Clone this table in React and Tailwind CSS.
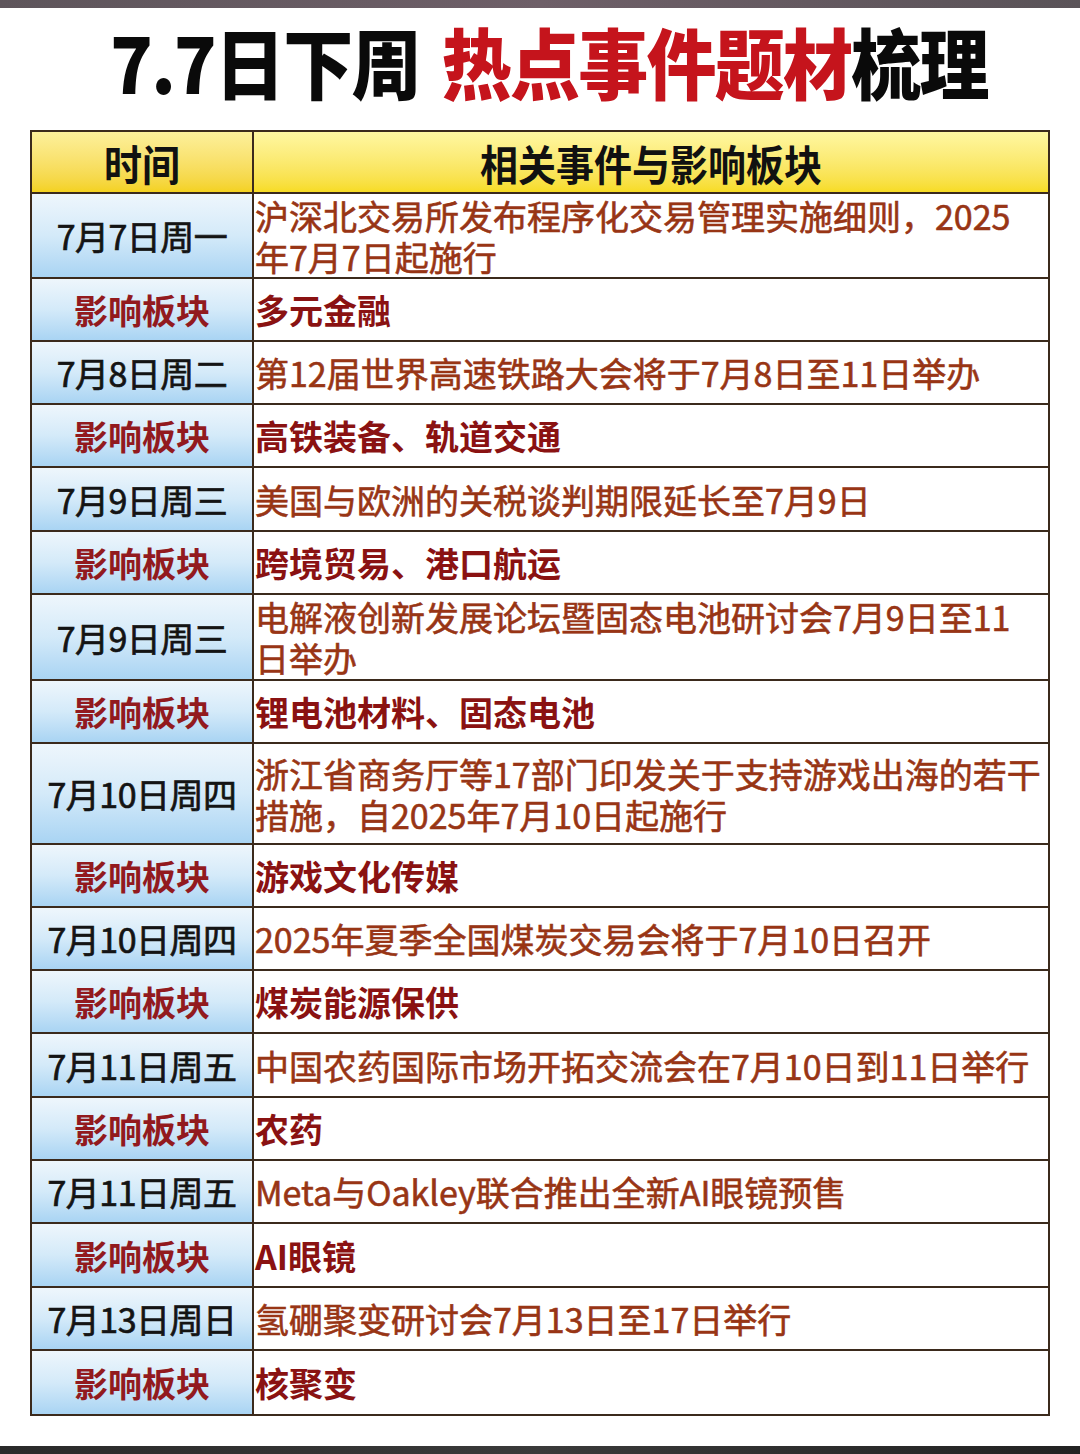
import React from 'react'

const rows = [
  { date: '7月7日周一', lines: ['沪深北交易所发布程序化交易管理实施细则，2025', '年7月7日起施行'], h: 'h-[85px]', sector: '多元金融', sh: 'h-[63px]' },
  { date: '7月8日周二', lines: ['第12届世界高速铁路大会将于7月8日至11日举办'], h: 'h-[63px]', sector: '高铁装备、轨道交通', sh: 'h-[63px]' },
  { date: '7月9日周三', lines: ['美国与欧洲的关税谈判期限延长至7月9日'], h: 'h-[64px]', sector: '跨境贸易、港口航运', sh: 'h-[63px]' },
  { date: '7月9日周三', lines: ['电解液创新发展论坛暨固态电池研讨会7月9日至11', '日举办'], h: 'h-[86px]', sector: '锂电池材料、固态电池', sh: 'h-[63px]' },
  { date: '7月10日周四', lines: ['浙江省商务厅等17部门印发关于支持游戏出海的若干', '措施，自2025年7月10日起施行'], h: 'h-[101px]', sector: '游戏文化传媒', sh: 'h-[63px]' },
  { date: '7月10日周四', lines: ['2025年夏季全国煤炭交易会将于7月10日召开'], h: 'h-[63px]', sector: '煤炭能源保供', sh: 'h-[63px]' },
  { date: '7月11日周五', lines: ['中国农药国际市场开拓交流会在7月10日到11日举行'], h: 'h-[64px]', sector: '农药', sh: 'h-[63px]' },
  { date: '7月11日周五', lines: ['Meta与Oakley联合推出全新AI眼镜预售'], h: 'h-[63px]', sector: 'AI眼镜', sh: 'h-[64px]' },
  { date: '7月13日周日', lines: ['氢硼聚变研讨会7月13日至17日举行'], h: 'h-[63px]', sector: '核聚变', sh: 'h-[65px]' },
]

const leftCell = 'flex items-center justify-center border-r-2 border-b-2 border-[#3b2a1c] bg-linear-to-b from-[#eef6fc] via-[#d4eaf9] to-[#a9d4f3] whitespace-nowrap'
const rightCell = 'flex flex-col justify-center border-r-2 border-b-2 border-[#3b2a1c] bg-white pl-[1px] whitespace-nowrap'

export default function App() {
  return (
    <div className="w-[1080px] h-[1454px] bg-white flex flex-col font-['Noto_Sans_CJK_SC',sans-serif] overflow-hidden">
      <div className="h-[8px] bg-linear-to-r from-[#5e555b] via-[#6e5f68] to-[#5a5358]" />
      <div className="h-[122px] flex items-center justify-center pb-[16px]">
        <h1 className="text-[70px] leading-none font-black tracking-tight scale-y-110 text-[#0a0a0a] ml-[18px]">
          7.7日下周<span className="ml-[22px] text-[#c5141c]">热点事件题材</span>梳理
        </h1>
      </div>
      <div className="mx-[30px] border-t-2 border-l-2 border-[#3b2a1c] grid grid-cols-[222px_1fr]">
        <div className="h-[62px] flex items-center justify-center border-r-2 border-b-2 border-[#3b2a1c] bg-linear-to-b from-[#fdf09a] to-[#f4d21e]">
          <span className="text-[38px] font-bold text-[#111] scale-y-110">时间</span>
        </div>
        <div className="h-[62px] flex items-center justify-center border-r-2 border-b-2 border-[#3b2a1c] bg-linear-to-b from-[#fff7a0] to-[#f7dc22]">
          <span className="text-[38px] font-bold text-[#111] scale-y-110">相关事件与影响板块</span>
        </div>
        {rows.map((r, i) => (
          <React.Fragment key={i}>
            <div className={`${leftCell} ${r.h}`}>
              <span className="text-[34px] font-normal text-[#141414] tracking-[-0.5px] [-webkit-text-stroke:0.7px_#141414]">{r.date}</span>
            </div>
            <div className={`${rightCell} ${r.h}`}>
              <div className="text-[34px] leading-[41px] font-normal text-[#983515] [-webkit-text-stroke:0.6px_#983515]">
                {r.lines.map((l, j) => (
                  <React.Fragment key={j}>
                    {j > 0 && <br />}
                    {l}
                  </React.Fragment>
                ))}
              </div>
            </div>
            <div className={`${leftCell} ${r.sh}`}>
              <span className="text-[34px] font-bold text-[#921a1e]">影响板块</span>
            </div>
            <div className={`${rightCell} ${r.sh}`}>
              <div className="text-[34px] leading-[41px] font-bold text-[#8a1212]">{r.sector}</div>
            </div>
          </React.Fragment>
        ))}
      </div>
      <div className="flex-1" />
      <div className="h-[8px] bg-linear-to-r from-[#2a2a2a] via-[#3a3a3a] to-[#222]" />
    </div>
  )
}
